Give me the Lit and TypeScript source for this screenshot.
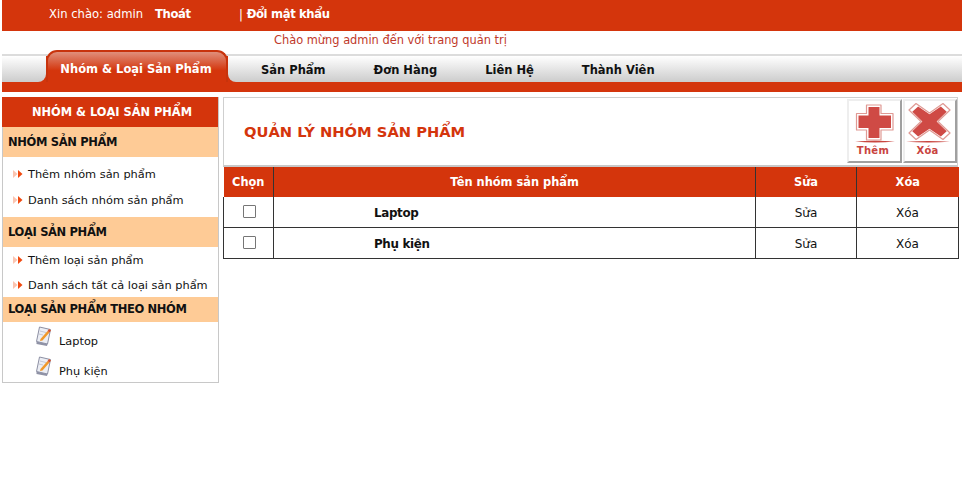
import { LitElement, html, css } from "lit";
import { customElement } from "lit/decorators.js";

const arrow = html`<svg class="arrow" width="10" height="8" viewBox="0 0 10 8"><path d="M0 0L4.5 4L0 8Z" fill="#fbc4b0"/><path d="M5 0L9.5 4L5 8Z" fill="#f04a10"/></svg>`;
const note = html`<svg class="note" width="18" height="21" viewBox="0 0 18 21">
  <path d="M4.5 1L15.5 3.5L12.5 18L1.5 15.5Z" fill="#eceef4" stroke="#8d90a4" stroke-width="1"/>
  <path d="M1.5 15.5L12.5 18L12 20L1.5 18Z" fill="#8f92a6"/>
  <path d="M5 5L11 6.5M4 8L8 9" stroke="#c4c6d4" stroke-width="1"/>
  <path d="M5.5 13L12.5 5L14.5 6.5L7.5 14.5L5 15Z" fill="#f0982a"/>
  <path d="M12.5 5L14.5 6.5L16 4.5L14 3Z" fill="#d8502a"/>
</svg>`;

const plusIcon = html`<svg class="ic" width="40" height="42" viewBox="0 0 40 42">
  <path d="M11.5 2H26V10.5H38V27H26V37H11.5V27H1.5V10.5H11.5Z" fill="#fff" stroke="#e09a94" stroke-width="1.2" stroke-linejoin="round"/>
  <path d="M13.5 4H24.5V12.5H36V25H24.5V35H13.5V25H3.5V12.5H13.5Z" fill="#cf4a45"/>
  <path d="M0 38.6Q20 37 40 38.6Q20 40.4 0 38.6Z" fill="#c9453f"/>
</svg>`;
const crossIcon = html`<svg class="ic" width="48" height="42" viewBox="0 0 48 42">
  <path d="M3 7L10 0.5L23.5 10L37 0.5L44 7L32 18.5L44 30L37 36.5L23.5 27L10 36.5L3 30L15 18.5Z" fill="#fff" stroke="#e09a94" stroke-width="1.2" stroke-linejoin="round"/>
  <path d="M3 7L10 0.5L23.5 10L37 0.5L44 7L32 18.5L44 30L37 36.5L23.5 27L10 36.5L3 30L15 18.5Z" fill="#cf4a45" transform="translate(23.5 18.5) scale(0.84) translate(-23.5 -18.5)"/>
  <path d="M0 38.8Q22 37.2 44 38.8Q22 40.4 0 38.8Z" fill="#c9453f"/>
</svg>`;

@customElement("app-root")
export class AppRoot extends LitElement {
  static styles = css`
    :host {
      display: block;
      width: 966px;
      height: 488px;
      box-sizing: border-box;
      padding: 0 4px 0 2px;
      font-family: "DejaVu Sans", Verdana, sans-serif;
      font-size: 11.35px;
      color: #000;
      background: #fff;
      overflow: hidden;
    }
    .top {
      height: 31px;
      background: #d4350c;
      color: #fff;
      display: flex;
      align-items: center;
      padding-left: 47px;
      padding-bottom: 4px;
      box-sizing: border-box;
      font-size: 11.6px;
    }
    .top b { font-weight: 700; font-size: 11.6px; letter-spacing: -0.35px; }
    .top .out { margin-left: 12px; width: 84px; }
    .welcome {
      height: 23px;
      box-sizing: border-box;
      padding: 2px 0 0 272px;
      color: #c0392b;
      font-size: 11.4px;
      line-height: 14px;
    }
    .nav {
      height: 38px;
      box-sizing: border-box;
      border-top: 2px solid #dcdcdc;
      border-bottom: 10px solid #d4350c;
      background: #d4350c;
      display: flex;
      align-items: stretch;
      font-weight: 700;
      font-size: 11.5px;
    }
    .nav-left {
      width: 44px;
      flex: none;
      background: linear-gradient(#ffffff, #cccccc);
      border-bottom-right-radius: 8px;
    }
    .nav-rest {
      flex: 1;
      display: flex;
      gap: 48px;
      padding: 7px 0 0 33px;
      background: linear-gradient(#ffffff, #cccccc);
      border-bottom-left-radius: 8px;
      color: #111;
    }
    .tab {
      margin-top: -6px;
      width: 182px;
      flex: none;
      box-sizing: border-box;
      border: 2px solid #c8330c;
      border-bottom: 0;
      border-radius: 11px 11px 0 0;
      background: linear-gradient(#e08f7b, #d4350c 62%);
      color: #fff;
      text-align: center;
      padding: 10px 2px 0 0;
    }
    .main { display: flex; gap: 4px; margin-top: 5px; align-items: flex-start; }
    aside {
      width: 217px;
      box-sizing: border-box;
      border: 1px solid #c8c8c8;
      border-top: 0;
    }
    .side-title {
      height: 30px;
      margin: 0 0 0 -1px;
      padding-left: 4px;
      background: #d4350c;
      color: #fff;
      font-weight: 700;
      text-align: center;
      line-height: 31px;
      font-size: 11.4px;
    }
    .sec {
      background: #fecb96;
      font-weight: 700;
      padding-left: 5px;
      font-size: 11.5px;
      letter-spacing: -0.35px;
      color: #111;
    }
    .sec.a { height: 30px; line-height: 31px; }
    .sec.b { height: 25px; line-height: 25px; }
    .link { display: flex; align-items: center; height: 26px; padding-left: 10px; color: #111; }
    .link.short { height: 25px; }
    .arrow { margin-right: 5px; flex: none; }
    .gap { height: 4px; }
    .sub { display: flex; height: 30px; padding-left: 32px; color: #111; }
    .note { flex: none; margin-top: 4px; }
    .sub span { margin-left: 6px; padding-top: 12px; }
    .panel {
      width: 735px;
      box-sizing: border-box;
    }
    .head {
      height: 70px;
      box-sizing: border-box;
      border: 1px solid #cfcfcf;
      border-bottom: 2px solid #c8c8c8;
      display: flex;
      align-items: flex-start;
      justify-content: space-between;
    }
    h1 {
      margin: 24px 0 0 20px;
      font-size: 14.7px;
      line-height: 20px;
      font-weight: 700;
      color: #d4350c;
    }
    .btns { display: flex; gap: 1px; padding-top: 1px; }
    .btn {
      width: 54px;
      height: 64px;
      box-sizing: border-box;
      background: #fff;
      border: 2px solid;
      border-color: #eeeeee #a0a0a0 #a0a0a0 #eeeeee;
      display: flex;
      flex-direction: column;
      align-items: center;
      padding-top: 2px;
      color: #c9453f;
      font-size: 10px;
      font-weight: 700;
      letter-spacing: 0.3px;
      line-height: 12px;
    }
    .btn.plus { width: 55px; }
    .btn.plus span { margin-right: 3px; }
    .btn.x span { margin-right: 5px; }
    .ic { flex: none; display: block; margin-bottom: 0; }
    table {
      border-collapse: collapse;
      width: 735px;
      table-layout: fixed;
      font-size: 12px;
    }
    .c1 { width: 50px; }
    .c2 { width: 482px; }
    .c3 { width: 101px; }
    .c4 { width: 102px; }
    th {
      background: #d4350c;
      color: #fff;
      height: 30px;
      padding: 0;
      font-weight: 700;
      border-left: 1px solid #333;
      font-size: 11.4px;
    }
    th:first-child { border-left: 0; }
    td {
      height: 31px;
      padding: 2px 0 0;
      box-sizing: border-box;
      border: 1px solid #333;
      text-align: center;
      color: #111;
    }
    tr.first td { border-top: 0; height: 30px; }
    td.name { text-align: left; padding-left: 100px; font-weight: 700; font-size: 11.9px; letter-spacing: -0.35px; }
    .cb {
      display: block;
      width: 13px;
      height: 13px;
      box-sizing: border-box;
      border: 1px solid #767676;
      border-radius: 1px;
      margin: -3px auto 0;
      position: relative;
      left: 1px;
      background: #fff;
    }
  `;

  render() {
    return html`
      <div class="top">
        <span>Xin chào: admin</span><b class="out">Thoát</b><span>|&nbsp;<b>Đổi mật khẩu</b></span>
      </div>
      <div class="welcome">Chào mừng admin đến với trang quản trị</div>
      <div class="nav">
        <div class="nav-left"></div>
        <div class="tab">Nhóm &amp; Loại Sản Phẩm</div>
        <div class="nav-rest">
          <div>Sản Phẩm</div>
          <div>Đơn Hàng</div>
          <div>Liên Hệ</div>
          <div>Thành Viên</div>
        </div>
      </div>
      <div class="main">
        <aside>
          <div class="side-title">NHÓM &amp; LOẠI SẢN PHẨM</div>
          <div class="sec a">NHÓM SẢN PHẨM</div>
          <div class="gap"></div>
          <div class="link">${arrow}Thêm nhóm sản phẩm</div>
          <div class="link">${arrow}Danh sách nhóm sản phẩm</div>
          <div class="gap"></div>
          <div class="sec a">LOẠI SẢN PHẨM</div>
          <div class="link short">${arrow}Thêm loại sản phẩm</div>
          <div class="link short">${arrow}Danh sách tất cả loại sản phẩm</div>
          <div class="sec b">LOẠI SẢN PHẨM THEO NHÓM</div>
          <div class="sub">${note}<span>Laptop</span></div>
          <div class="sub">${note}<span>Phụ kiện</span></div>
        </aside>
        <section class="panel">
          <div class="head">
            <h1>QUẢN LÝ NHÓM SẢN PHẨM</h1>
            <div class="btns">
              <div class="btn plus">${plusIcon}<span>Thêm</span></div>
              <div class="btn x">${crossIcon}<span>Xóa</span></div>
            </div>
          </div>
          <table>
            <colgroup><col class="c1"/><col class="c2"/><col class="c3"/><col class="c4"/></colgroup>
            <tr><th>Chọn</th><th>Tên nhóm sản phẩm</th><th>Sửa</th><th>Xóa</th></tr>
            <tr class="first"><td><i class="cb"></i></td><td class="name">Laptop</td><td>Sửa</td><td>Xóa</td></tr>
            <tr><td><i class="cb"></i></td><td class="name">Phụ kiện</td><td>Sửa</td><td>Xóa</td></tr>
          </table>
        </section>
      </div>
    `;
  }
}
